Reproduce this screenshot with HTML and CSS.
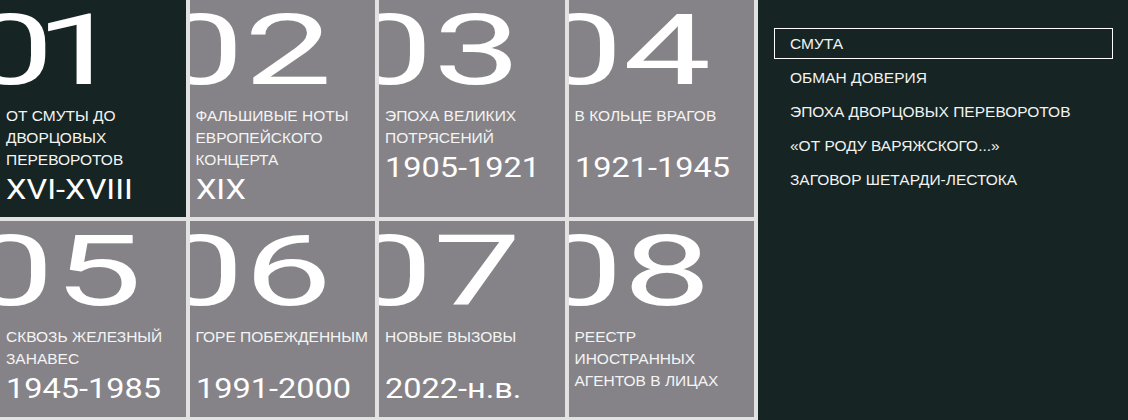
FILE: index.html
```html
<!DOCTYPE html>
<html>
  <head>
    <meta charset="utf-8">
    <meta name="viewport" content="width=device-width, initial-scale=1.0">
    <title>Главы</title>
    <link rel="stylesheet" href="styles.css">
  </head>
  <body>
    <div class="page">
      <!-- сетка глав -->
      <div class="tiles">
        <a class="tile tile-active" href="#">
          <div class="tile-num tile-num-one">01</div>
          <div class="tile-title">ОТ СМУТЫ ДО<br>ДВОРЦОВЫХ<br>ПЕРЕВОРОТОВ</div>
          <div class="tile-date">XVI-XVIII</div>
        </a>
        <a class="tile" href="#">
          <div class="tile-num">02</div>
          <div class="tile-title">ФАЛЬШИВЫЕ НОТЫ<br>ЕВРОПЕЙСКОГО<br>КОНЦЕРТА</div>
          <div class="tile-date">XIX</div>
        </a>
        <a class="tile" href="#">
          <div class="tile-num">03</div>
          <div class="tile-title">ЭПОХА ВЕЛИКИХ<br>ПОТРЯСЕНИЙ</div>
          <div class="tile-date">1905-1921</div>
        </a>
        <a class="tile" href="#">
          <div class="tile-num">04</div>
          <div class="tile-title">В КОЛЬЦЕ ВРАГОВ</div>
          <div class="tile-date">1921-1945</div>
        </a>
        <a class="tile" href="#">
          <div class="tile-num">05</div>
          <div class="tile-title">СКВОЗЬ ЖЕЛЕЗНЫЙ<br>ЗАНАВЕС</div>
          <div class="tile-date">1945-1985</div>
        </a>
        <a class="tile" href="#">
          <div class="tile-num">06</div>
          <div class="tile-title">ГОРЕ ПОБЕЖДЕННЫМ</div>
          <div class="tile-date">1991-2000</div>
        </a>
        <a class="tile" href="#">
          <div class="tile-num">07</div>
          <div class="tile-title">НОВЫЕ ВЫЗОВЫ</div>
          <div class="tile-date">2022-н.в.</div>
        </a>
        <a class="tile" href="#">
          <div class="tile-num">08</div>
          <div class="tile-title">РЕЕСТР<br>ИНОСТРАННЫХ<br>АГЕНТОВ В ЛИЦАХ</div>
        </a>
      </div>

      <!-- подразделы выбранной главы -->
      <nav class="chapters">
        <ul>
          <li class="active"><a href="#">СМУТА</a></li>
          <li><a href="#">ОБМАН ДОВЕРИЯ</a></li>
          <li><a href="#">ЭПОХА ДВОРЦОВЫХ ПЕРЕВОРОТОВ</a></li>
          <li><a href="#">«ОТ РОДУ ВАРЯЖСКОГО...»</a></li>
          <li><a href="#">ЗАГОВОР ШЕТАРДИ-ЛЕСТОКА</a></li>
        </ul>
      </nav>
    </div>
  </body>
</html>
```

FILE: styles.css
```css
body {
  margin: 0;
  background: #e2e2e2;
  font-family: "Liberation Sans", Arial, sans-serif;
  color: #f2f2f2;
  overflow: hidden;
}

.page {
  display: grid;
  grid-template-columns: 754px 1fr;
  column-gap: 4px;
  height: 420px;
}

/* плитки глав */
.tiles {
  display: grid;
  grid-template-columns: repeat(4, 1fr);
  grid-template-rows: 217px 196px;
  gap: 4px;
  align-content: start;
}

.tile {
  display: block;
  background: #858388;
  color: #f4f4f4;
  text-decoration: none;
  padding: 8px 4px 0 6px;
  overflow: hidden;
}

.tile-active {
  background: #162523;
}

/* крупный номер, первый ноль уходит за край */
.tile-num {
  font-family: Roboto, "Liberation Sans", sans-serif;
  font-weight: 400;
  font-size: 98px;
  line-height: 86px;
  height: 86px;
  color: #fff;
  margin-left: -40px;
  transform: scaleX(1.6);
  transform-origin: left center;
  white-space: nowrap;
}

.tile-num-one {
  letter-spacing: -12px;
}

.tile-title {
  margin-top: 11px;
  min-height: 44px;
  font-size: 15.5px;
  line-height: 22px;
}

.tile-date {
  margin-top: 5px;
  font-family: Roboto, "Liberation Sans", sans-serif;
  font-size: 28px;
  line-height: 28px;
  color: #fff;
  transform: scaleX(1.16);
  transform-origin: left center;
  white-space: nowrap;
}

/* список подразделов */
.chapters {
  background: #162523;
  padding: 28px 15px 0 16px;
}

.chapters ul {
  list-style: none;
  margin: 0;
  padding: 0;
}

.chapters li {
  margin-bottom: 3px;
}

.chapters a {
  display: block;
  padding: 5px 15px;
  border: 1px solid transparent;
  color: #f2f2f2;
  text-decoration: none;
  font-size: 15.5px;
  line-height: 19px;
}

.chapters li.active a {
  border-color: #fff;
}
```
